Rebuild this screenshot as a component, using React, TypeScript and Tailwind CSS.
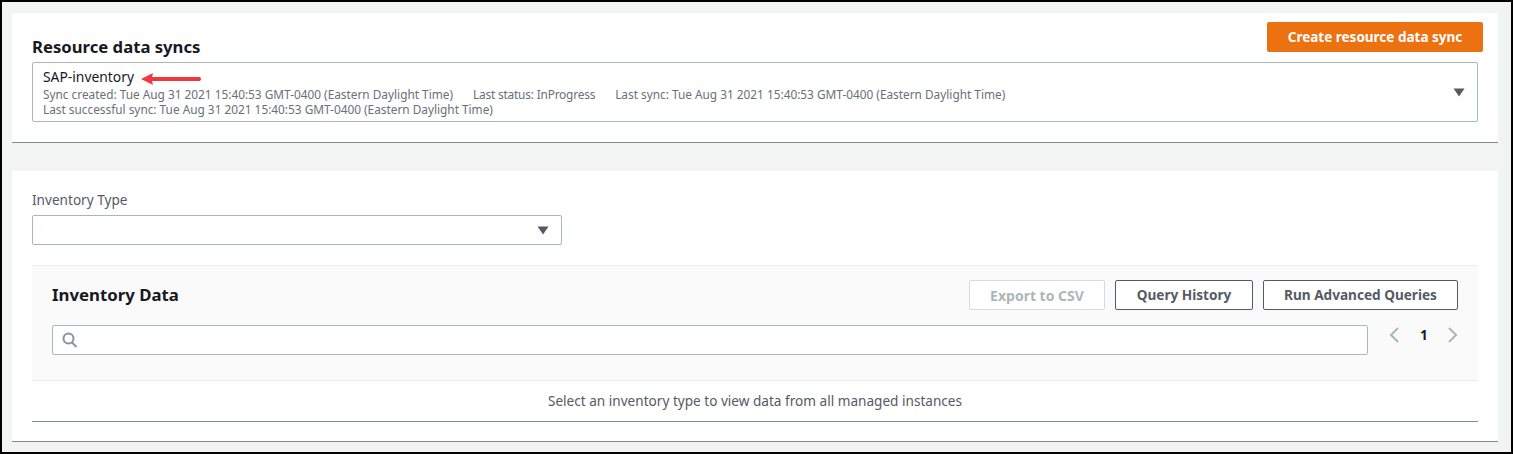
function Caret() {
  return (
    <svg width="12" height="9" viewBox="0 0 12 9" className="shrink-0">
      <path d="M0.5 0.5h11L6 8.5z" fill="#545b64" />
    </svg>
  );
}

function OutlineButton({ label, width }: { label: string; width: string }) {
  return (
    <button className={`h-[30px] rounded-[2px] border border-[#545b64] bg-white text-[13.6px] font-bold text-[#545b64] ${width}`}>
      {label}
    </button>
  );
}

export default function App() {
  const font = { fontFamily: '"Noto Sans", Arial, sans-serif' };

  return (
    <div
      style={font}
      className="flex h-[454px] w-[1513px] flex-col border-2 border-black bg-[#f2f3f3] pl-[10px] pr-[13px] pt-[11px]"
    >
      <section className="h-[130px] border-b border-[#7f8d8f] bg-white pl-5 pr-[15px] pt-[9px]">
        <div className="flex h-[40px] items-start justify-between">
          <h2 className="mt-[13px] text-[16.7px] leading-[24px] font-bold text-[#16191f]">Resource data syncs</h2>
          <button className="h-[30px] w-[216px] rounded-[2px] bg-[#ec7211] text-[13.5px] font-bold text-white">
            Create resource data sync
          </button>
        </div>
        <div className="mr-[5px] flex h-[60px] items-center justify-between rounded-[2px] border border-[#aab7b8] pl-[10px] pr-[12px]">
          <div>
            <div className="flex h-[19px] items-center text-[13.85px] leading-[18px] text-[#16191f]">
              SAP-inventory
              <svg width="61" height="12" viewBox="0 0 61 12" className="ml-[7px] mt-1">
                <path d="M0 6 L12 0 L11 4 L59 4 Q61 6 59 8 L11 8 L12 12 Z" fill="#ee3a3f" />
              </svg>
            </div>
            <div className="mt-px flex gap-5 text-[11.83px] leading-[15px] text-[#687078]">
              <span>Sync created: Tue Aug 31 2021 15:40:53 GMT-0400 (Eastern Daylight Time)</span>
              <span className="tracking-[-0.17px]">Last status: InProgress</span>
              <span>Last sync: Tue Aug 31 2021 15:40:53 GMT-0400 (Eastern Daylight Time)</span>
            </div>
            <div className="text-[11.83px] leading-[15px] text-[#687078]">
              Last successful sync: Tue Aug 31 2021 15:40:53 GMT-0400 (Eastern Daylight Time)
            </div>
          </div>
          <Caret />
        </div>
      </section>

      <section className="mt-[28px] h-[271px] border-b border-[#7f8d8f] bg-white px-5 pt-5">
        <label className="-mt-px block text-[13.6px] leading-[19px] text-[#545b64]">Inventory Type</label>
        <div className="mt-[6px] flex h-[30px] w-[530px] items-center justify-end rounded-[2px] border border-[#aab7b8] pr-[12px]">
          <Caret />
        </div>

        <div className="mt-5 border-b border-[#7f8d8f]">
          <div className="h-[116px] border-y border-[#eaeded] bg-[#fafafa] px-5 pt-[14px]">
            <div className="flex items-center justify-between">
              <h3 className="-mt-px text-[16.8px] font-bold text-[#16191f]">Inventory Data</h3>
              <div className="flex gap-[10px]">
                <button className="h-[30px] w-[136px] rounded-[2px] border border-[#d5dbdb] bg-white text-[14px] font-bold text-[#aab7b8]">
                  Export to CSV
                </button>
                <OutlineButton label="Query History" width="w-[138px]" />
                <OutlineButton label="Run Advanced Queries" width="w-[195px]" />
              </div>
            </div>
            <div className="mt-[15px] flex items-start">
              <div className="flex h-[30px] w-[1316px] shrink-0 items-center rounded-[2px] border border-[#aab7b8] bg-white pl-[9px]">
                <svg width="16" height="16" viewBox="0 0 16 16" fill="none" stroke="#879596" strokeWidth="2">
                  <circle cx="6.5" cy="6.5" r="5" />
                  <path d="M10 10.5 14.5 15" />
                </svg>
              </div>
              <div className="ml-[21px] flex h-[20px] items-center">
                <svg width="10" height="16" viewBox="0 0 10 16" fill="none" stroke="#aab7b8" strokeWidth="2">
                  <path d="M9 1 2 8l7 7" />
                </svg>
                <span className="ml-[21px] text-[13.6px] font-bold text-[#16191f]">1</span>
                <svg width="10" height="16" viewBox="0 0 10 16" fill="none" stroke="#aab7b8" strokeWidth="2" className="ml-[20px]">
                  <path d="m1 1 7 7-7 7" />
                </svg>
              </div>
            </div>
          </div>
          <div className="flex h-[40px] items-center justify-center text-[13.6px] text-[#545b64]">
            Select an inventory type to view data from all managed instances
          </div>
        </div>
      </section>
    </div>
  );
}
